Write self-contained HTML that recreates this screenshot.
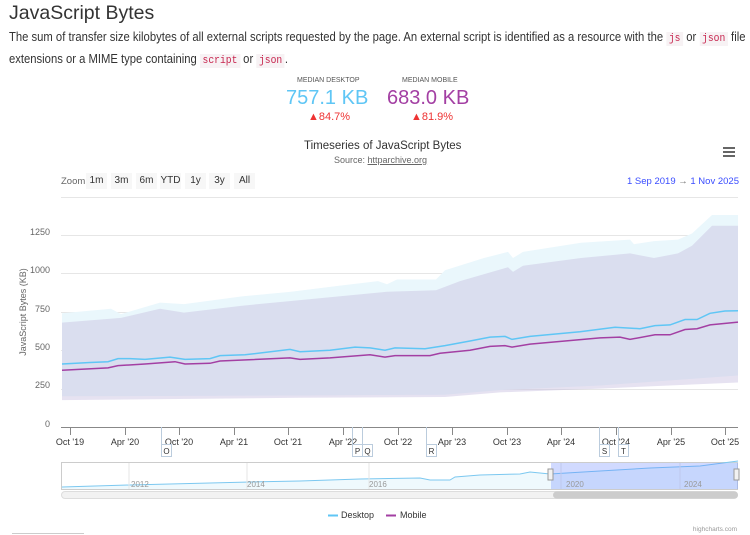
<!DOCTYPE html>
<html><head><meta charset="utf-8"><style>
body{margin:0;width:750px;height:535px;background:#fff;font-family:"Liberation Sans",sans-serif;position:relative;overflow:hidden;color:#333}
.a{position:absolute;white-space:nowrap}
h1{position:absolute;left:9px;top:2px;margin:0;font-weight:normal;font-size:19.5px;color:#333;font-family:"Liberation Sans",sans-serif}
.d{left:9px;top:27px;font-size:12.8px;line-height:19px;color:#333;transform:scaleX(0.88);transform-origin:0 0}
code{font-family:"Liberation Mono",monospace;color:#c7254e;background:#f7f2f4;padding:1px 3px;font-size:11px}
.btn{position:absolute;top:173px;height:16px;width:21px;background:#f7f7f7;font-size:10px;text-align:center;line-height:16px;color:#333}
</style></head><body>
<h1>JavaScript Bytes</h1>
<div class="a d">The sum of transfer size kilobytes of all external scripts requested by the page. An external script is identified as a resource with the <code>js</code> or <code>json</code> file<br>extensions or a MIME type containing <code>script</code> or <code>json</code>.</div>
<div class="a" style="left:297px;top:77px;font-size:7px;color:#555">MEDIAN DESKTOP</div>
<div class="a" style="left:402px;top:77px;font-size:7px;color:#555">MEDIAN MOBILE</div>
<div class="a" style="left:286px;top:87px;font-size:20px;color:#5fc6f5">757.1 KB</div>
<div class="a" style="left:387px;top:87px;font-size:20px;color:#a33fa3">683.0 KB</div>
<div class="a" style="left:308px;top:111px;font-size:11px;color:#e33">▲84.7%</div>
<div class="a" style="left:411px;top:111px;font-size:11px;color:#e33">▲81.9%</div>
<div class="a" style="left:304px;top:140px;font-size:11.5px;color:#333">Timeseries of JavaScript Bytes</div>
<div class="a" style="left:334px;top:155px;font-size:9px;color:#666">Source: <u>httparchive.org</u></div>
<div class="a" style="left:723px;top:147px;width:12px;height:2px;background:#666;box-shadow:0 4px 0 #666,0 8px 0 #666"></div>
<div class="a" style="left:61px;top:176px;font-size:9.5px;color:#666">Zoom</div>
<div class="btn" style="left:86px">1m</div><div class="btn" style="left:111px">3m</div><div class="btn" style="left:136px">6m</div><div class="btn" style="left:160px">YTD</div><div class="btn" style="left:185px">1y</div><div class="btn" style="left:209px">3y</div><div class="btn" style="left:234px">All</div>
<div class="a" style="left:627px;top:176px;font-size:9.5px;color:#3a4dff">1 Sep 2019 <span style="color:#666">→</span> 1 Nov 2025</div>
<svg class="a" style="left:0;top:0" width="750" height="535" id="s">
<g stroke="#e6e6e6" stroke-width="1">
<line x1="61" x2="738" y1="197.5" y2="197.5"/><line x1="61" x2="738" y1="235.5" y2="235.5"/><line x1="61" x2="738" y1="273.5" y2="273.5"/><line x1="61" x2="738" y1="312.5" y2="312.5"/><line x1="61" x2="738" y1="350.5" y2="350.5"/><line x1="61" x2="738" y1="389.5" y2="389.5"/>
</g>
<g id="plot"></g>
<line x1="61" x2="738" y1="427.5" y2="427.5" stroke="#888"/>
<g font-size="9" fill="#666" text-anchor="end">
<text x="50" y="235">1250</text><text x="50" y="273">1000</text><text x="50" y="312">750</text><text x="50" y="350">500</text><text x="50" y="388">250</text><text x="50" y="427">0</text></g>
<text transform="translate(26,312) rotate(-90)" font-size="9" fill="#666" text-anchor="middle">JavaScript Bytes (KB)</text>
<g id="ax" font-size="9" fill="#333" text-anchor="middle"></g>
<rect x="61.5" y="462.5" width="676" height="27" fill="#fff" stroke="#ccc"/>
<g id="nav"></g>
<rect x="551" y="463" width="187" height="26" fill="rgba(102,133,255,0.3)"/>
<rect x="548" y="469" width="5" height="11" fill="#f2f2f2" stroke="#999"/><rect x="734" y="469" width="5" height="11" fill="#f2f2f2" stroke="#999"/>
<g font-size="8" fill="#999"><text x="131" y="487">2012</text><text x="247" y="487">2014</text><text x="369" y="487">2016</text><text x="566" y="487">2020</text><text x="684" y="487">2024</text></g>
<rect x="61.5" y="491.5" width="676" height="7" rx="3.5" fill="#f2f2f2" stroke="#ddd"/>
<rect x="553" y="491.5" width="185" height="7" rx="3.5" fill="#ccc"/>
<line x1="328" x2="338" y1="515.5" y2="515.5" stroke="#5fc6f5" stroke-width="2"/><text x="341" y="518" font-size="9" fill="#333">Desktop</text>
<line x1="386" x2="396" y1="515.5" y2="515.5" stroke="#a33fa3" stroke-width="2"/><text x="400" y="518" font-size="9" fill="#333">Mobile</text>
<text x="737" y="531" font-size="6.5" fill="#999" text-anchor="end">highcharts.com</text>
<line x1="12" x2="84" y1="533.5" y2="533.5" stroke="#ccc"/>
</svg>
<script>
function Y(v){return 427-v*0.1536}
function pts(a){return a.map(p=>p[0]+','+Y(p[1]).toFixed(1)).join(' ')}
function band(u,l){return pts(u)+' '+pts(l.slice().reverse())}
var dU=[[62,740],[111,770],[121,735],[160,810],[184,800],[242,850],[291,880],[339,920],[378,950],[387,930],[397,960],[436,960],[445,1020],[484,1100],[508,1140],[513,1100],[523,1140],[581,1200],[630,1220],[634,1190],[654,1210],[678,1220],[692,1260],[712,1380],[738,1380]];
var mU=[[62,680],[121,710],[160,770],[184,745],[242,790],[291,820],[339,850],[387,880],[436,890],[460,950],[508,1040],[513,1010],[523,1050],[581,1100],[630,1130],[654,1100],[678,1130],[692,1180],[712,1310],[738,1310]];
var dL=[[62,200],[300,205],[445,210],[500,240],[600,270],[738,335]];
var mL=[[62,175],[300,190],[445,195],[500,225],[600,250],[738,290]];
var d=[[62,410],[90,420],[108,425],[118,445],[130,445],[145,440],[170,455],[185,440],[210,445],[220,465],[245,470],[290,505],[300,490],[330,500],[355,520],[370,515],[385,500],[395,515],[425,510],[445,530],[470,560],[490,585],[505,590],[512,570],[530,590],[580,620],[615,650],[640,640],[655,660],[670,665],[685,700],[697,700],[710,740],[725,755],[738,757]];
var m=[[62,370],[108,385],[118,400],[145,410],[175,425],[185,410],[210,415],[220,430],[290,450],[300,440],[330,450],[370,470],[385,455],[395,465],[430,465],[440,480],[470,500],[490,525],[505,530],[512,520],[530,540],[600,580],[620,585],[630,570],[655,600],[670,600],[685,635],[697,640],[710,665],[738,683]];
var g='';
g+='<polygon points="'+band(dU,dL)+'" fill="#eaf7fc"/>';
g+='<polygon points="'+band(mU,mL)+'" fill="rgba(200,190,225,0.45)"/>';
g+='<polyline points="'+pts(d)+'" fill="none" stroke="#5fc6f5" stroke-width="1.5"/>';
g+='<polyline points="'+pts(m)+'" fill="none" stroke="#a33fa3" stroke-width="1.5"/>';
document.getElementById('plot').innerHTML=g;
var lab=["Oct '19","Apr '20","Oct '20","Apr '21","Oct '21","Apr '22","Oct '22","Apr '23","Oct '23","Apr '24","Oct '24","Apr '25","Oct '25"];
var a='';for(var i=0;i<13;i++){var x=Math.round(70+i*54.6);a+='<line x1="'+x+'.5" x2="'+x+'.5" y1="427" y2="435" stroke="#888"/><text x="'+x+'" y="445">'+lab[i]+'</text>';}
var fl=[["O",161],["P",352],["Q",362],["R",426],["S",599],["T",618]];
fl.forEach(f=>{a+='<line x1="'+f[1]+'.5" x2="'+f[1]+'.5" y1="427" y2="444" stroke="#bcd"/><rect x="'+f[1]+'.5" y="444.5" width="10" height="12" fill="#fff" stroke="#bcd"/><text x="'+(f[1]+5.5)+'" y="454" font-size="8">'+f[0]+'</text>';});
document.getElementById('ax').innerHTML=a;
var n=[[62,487],[130,485],[250,482],[300,481],[360,479],[420,478],[430,480],[450,480],[455,477],[480,475],[520,474],[530,472],[550,474],[600,471],[650,468],[700,466],[738,461]];
var np=n.map(p=>p.join(',')).join(' ');
document.getElementById('nav').innerHTML='<polygon points="62,489 '+np+' 738,489" fill="rgba(190,232,248,0.25)"/><polyline points="'+np+'" fill="none" stroke="#7cc8f0"/>'+[129,247,369,561,680].map(x=>'<line x1="'+x+'" x2="'+x+'" y1="463" y2="489" stroke="#e6e6e6"/>').join('');
</script>
</body></html>
